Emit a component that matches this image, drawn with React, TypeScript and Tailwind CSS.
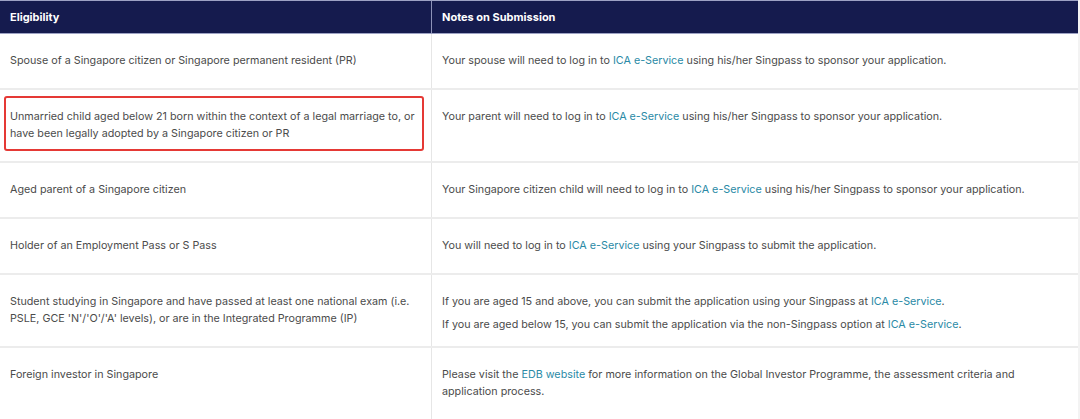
import React from "react";

const Link = ({ children }: { children: React.ReactNode }) => (
  <span className="text-[#2a8aa6]">{children}</span>
);

const cellL = "pl-[10px] pr-[12px] pt-[18px] pb-[19px]";
const cellR = "pl-[10px] pr-[12px] pt-[18px] pb-[19px] border-l border-[#e6e6e6]";

export default function App() {
  return (
    <div
      className="w-[1080px] h-[419px] overflow-hidden bg-[#f3f3f3] text-[10.75px] leading-[17px] text-[#4b4b4b]"
      style={{ fontFamily: "Inter, 'Noto Sans', sans-serif" }}
    >
      <div className="w-[1078px] bg-white">
        <div className="grid grid-cols-[431px_1fr] bg-[#151b4e] border-t border-b border-[#9da2c4] text-white font-bold text-[11px]">
          <div className="h-[32px] flex items-center pl-[10px]">Eligibility</div>
          <div className="h-[32px] flex items-center pl-[10px] border-l border-[#8d92b8]">Notes on Submission</div>
        </div>

        <div className="grid grid-cols-[431px_1fr] border-b-2 border-[#ececec]">
          <div className={cellL}>
            <p>Spouse of a Singapore citizen or Singapore permanent resident (PR)</p>
          </div>
          <div className={cellR}>
            <p>
              Your spouse will need to log in to <Link>ICA e-Service</Link> using his/her Singpass to sponsor your application.
            </p>
          </div>
        </div>

        <div className="grid grid-cols-[431px_1fr] border-b-2 border-[#ececec]">
          <div className="pl-[4px] pr-[7px] pt-[6px] pb-[10px]">
            <div className="border-2 border-[#e53935] rounded-[3px] pl-[4px] pr-[4px] pt-[10px] pb-[7px]">
              <p>
                Unmarried child aged below 21 born within the context of a legal marriage to, or have been legally adopted by a Singapore citizen or PR
              </p>
            </div>
          </div>
          <div className={cellR}>
            <p>
              Your parent will need to log in to <Link>ICA e-Service</Link> using his/her Singpass to sponsor your application.
            </p>
          </div>
        </div>

        <div className="grid grid-cols-[431px_1fr] border-b-2 border-[#ececec]">
          <div className={cellL}>
            <p>Aged parent of a Singapore citizen</p>
          </div>
          <div className={cellR}>
            <p>
              Your Singapore citizen child will need to log in to <Link>ICA e-Service</Link> using his/her Singpass to sponsor your application.
            </p>
          </div>
        </div>

        <div className="grid grid-cols-[431px_1fr] border-b-2 border-[#ececec]">
          <div className={cellL}>
            <p>Holder of an Employment Pass or S Pass</p>
          </div>
          <div className={cellR}>
            <p>
              You will need to log in to <Link>ICA e-Service</Link> using your Singpass to submit the application.
            </p>
          </div>
        </div>

        <div className="grid grid-cols-[431px_1fr] border-b-2 border-[#ececec]">
          <div className={cellL}>
            <p>
              Student studying in Singapore and have passed at least one national exam (i.e. PSLE, GCE 'N'/'O'/'A' levels), or are in the Integrated Programme (IP)
            </p>
          </div>
          <div className="pl-[10px] pr-[12px] pt-[18px] pb-[12px] border-l border-[#e6e6e6] flex flex-col gap-[6px]">
            <p>
              If you are aged 15 and above, you can submit the application using your Singpass at <Link>ICA e-Service</Link>.
            </p>
            <p>
              If you are aged below 15, you can submit the application via the non-Singpass option at <Link>ICA e-Service</Link>.
            </p>
          </div>
        </div>

        <div className="grid grid-cols-[431px_1fr]">
          <div className={cellL}>
            <p>Foreign investor in Singapore</p>
          </div>
          <div className={cellR + " pr-[50px]"}>
            <p>
              Please visit the <Link>EDB website</Link> for more information on the Global Investor Programme, the assessment criteria and application process.
            </p>
            <div className="h-[20px]" />
          </div>
        </div>
      </div>
    </div>
  );
}
